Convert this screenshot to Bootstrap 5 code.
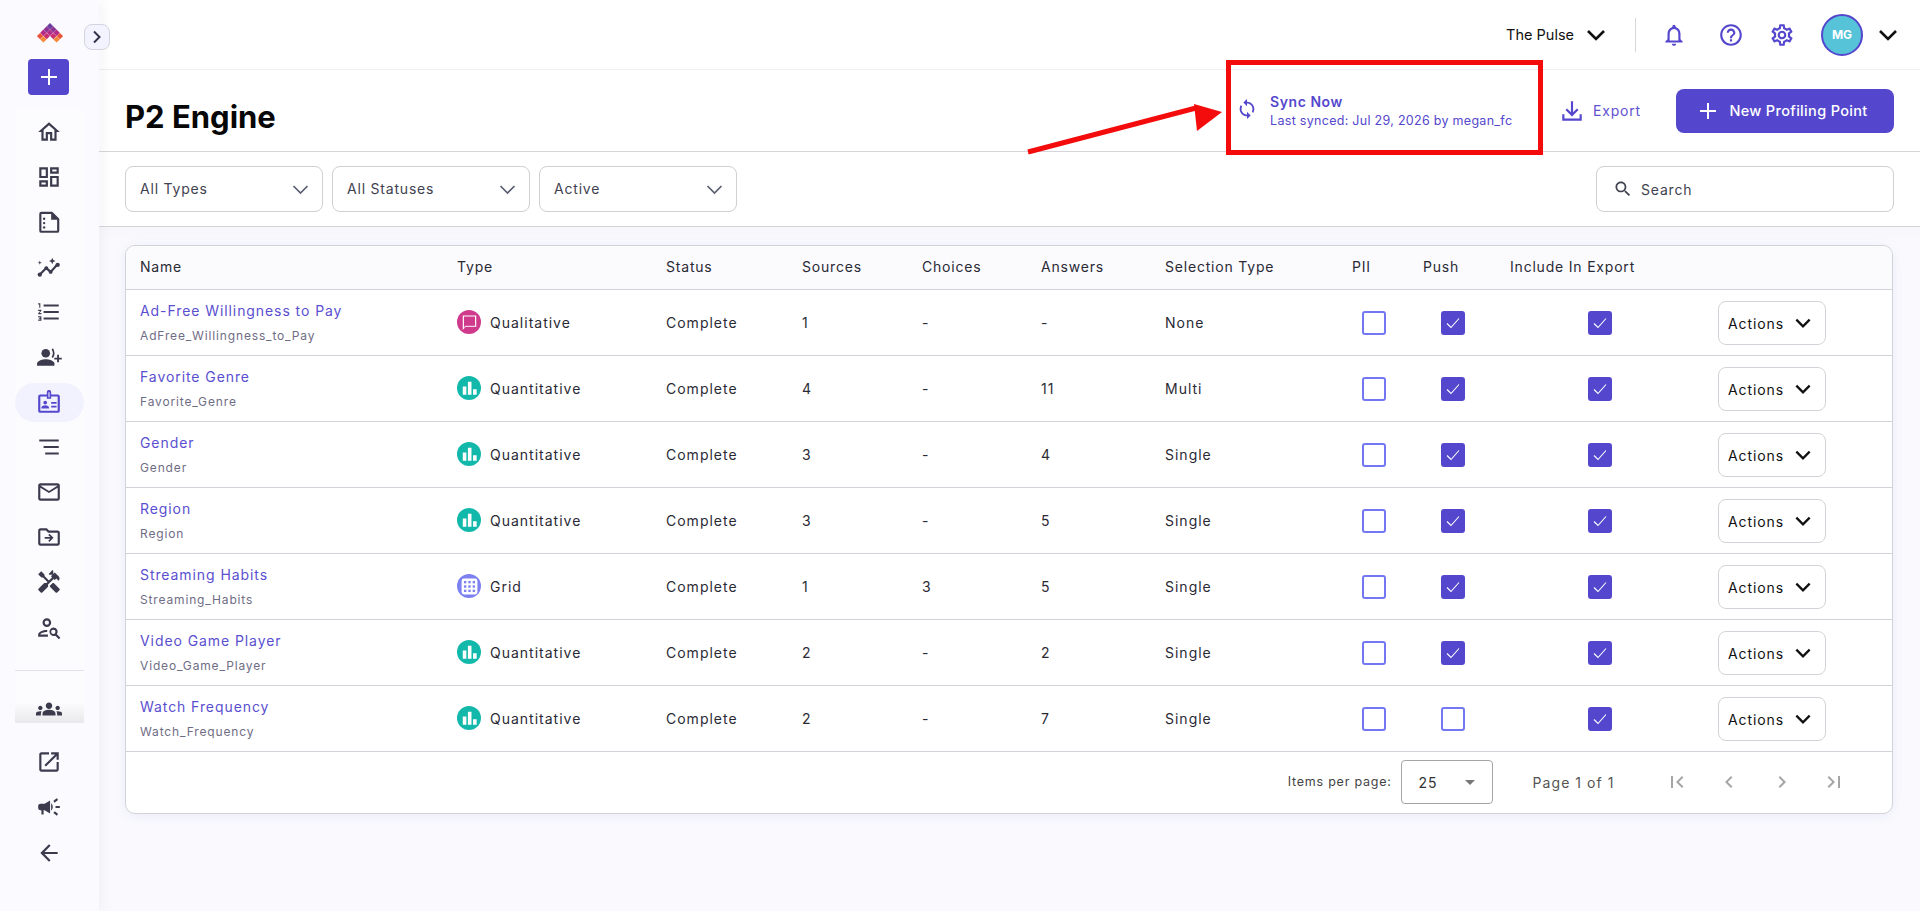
<!DOCTYPE html>
<html lang="en">
<head>
<meta charset="utf-8">
<title>P2 Engine</title>
<link href="https://cdn.jsdelivr.net/npm/bootstrap@5.3.0/dist/css/bootstrap.min.css" rel="stylesheet">
<style>
html,body{height:100%;}
body{font-family:Inter,"Liberation Sans",sans-serif;color:#2a2a35;background:#fff;font-size:14px;letter-spacing:.8px;overflow:hidden;}
.app-shell{height:911px;position:relative;}
.side-rail{width:99px;flex:none;background:#fafaff;box-shadow:4px 0 10px rgba(60,60,120,.05);position:relative;z-index:2;}
.rail-logo{height:59px;padding-top:23px;}
.rail-add{width:41px;height:36px;background:#5447cd;border-radius:4px;color:#fff;border:0;padding:0;margin-left:28px;}
.rail-col{width:69px;margin:14px auto 0;background:#fcfcfe;}
.rail-item{height:45.1px;color:#3c3b4e;padding-right:1px;}
.rail-item svg{width:26px;height:26px;fill:currentColor;}
.rail-item.is-on{color:#5447cd;position:relative;z-index:0;}
.rail-item.is-on::before{content:"";position:absolute;width:69px;height:39px;left:0;border-radius:20px;background:#f2f2fe;z-index:-1;}
.rail-rule{border-top:1px solid #e3e3e8;margin-top:20px;height:53px;background:linear-gradient(#fcfcfe 60%,#e9e9ec);}
.rail-rule svg{width:26px;height:26px;fill:#3c3b4e;margin-top:25px;margin-right:1px;}
.rail-low{margin-top:16px;}
.rail-low .rail-item{height:45.500px;}
.rail-toggle{position:absolute;left:84px;top:24px;width:26px;height:26px;border:1px solid #d4d4dc;border-radius:8px;background:#f3f3ff;z-index:3;padding:0;}
.top-strip{height:70px;flex:none;border-bottom:1px solid #eeeef3;padding-right:20px;}
.pulse-name{color:#111;font-size:14.5px;letter-spacing:0;margin-right:10px;}
.strip-rule{width:1px;height:34px;background:#d6d6da;margin:0 25px 0 27px;}
.strip-ico{fill:#5447cd;width:26px;height:26px;}
.ico-gap-a{margin-left:31px;}.ico-gap-b{margin-left:25px;}
.user-disc{width:42px;height:42px;border-radius:50%;background:#56c3d9;border:2px solid #5447cd;color:#fff;font-size:12px;font-weight:700;letter-spacing:0;margin:0 13px 0 26px;}
.pulse-chev{width:24px;height:24px;fill:none;stroke:#111;stroke-width:2.6;}
.head-row{height:82px;flex:none;border-bottom:1px solid #d6d6da;padding:0 26px;}
.page-name{font-size:31px;font-weight:700;color:#070707;letter-spacing:0;margin:13px 0 0;line-height:1.2;}
.sync-box{width:324px;flex:none;color:#5447cd;margin-top:-4px;padding-left:1px;}
.sync-box svg{width:22px;height:22px;flex:none;fill:#5447cd;margin-right:12px;}
.sync-text{padding-top:6px;}
.sync-title{font-size:14px;font-weight:600;line-height:18px;letter-spacing:.55px;}
.sync-sub{font-size:12.5px;line-height:20px;white-space:nowrap;letter-spacing:.29px;}
.export-link{color:#5d52cf;font-size:14px;margin-right:35px;}
.export-link svg{width:26px;height:26px;fill:#5447cd;margin-right:8px;}
.new-btn{width:218px;height:44px;background:#5447cd;color:#fff;border:0;border-radius:8px;font-size:14.5px;font-weight:500;padding:0 6px 0 0;letter-spacing:.33px;}
.new-btn svg{width:24px;height:24px;fill:#fff;margin-right:9px;}
.filter-row{height:75px;flex:none;border-bottom:1px solid #d6d6da;padding:0 26px;gap:9px;}
.drop-box{width:198px;height:46px;border:1px solid #cfcfd4;border-radius:8px;padding:0 11px 0 14px;color:#3f4250;font-size:14px;background:#fff;}
.drop-box span{padding-bottom:2px;}
.drop-box svg{width:21px;height:21px;fill:none;stroke:#5a6072;stroke-width:2;}
.find-box{width:298px;height:46px;border:1px solid #cfcfd4;border-radius:8px;padding-left:16px;color:#3f4250;}
.find-box svg{width:20px;height:20px;fill:#3f4250;margin-right:8px;}
.work-area{background:linear-gradient(#f7f7fb,#fafafe 18px);padding:18px 27px 0 26px;flex:1 1 auto;min-height:0;}
.grid-card{border:1px solid #d2d2d8;border-radius:10px;background:#fff;box-shadow:0 2px 14px rgba(80,80,200,.09);overflow:hidden;}
.pp-table{table-layout:fixed;width:100%;margin:0;font-size:14px;}
.pp-table th{background:#fbfbfe;font-weight:400;height:43px;padding:0 14px 2px;color:#2a2a35;border-bottom:1px solid #d2d2d8;white-space:nowrap;vertical-align:middle;}
.pp-table td{height:66px;padding:0 14px;border-bottom:1px solid #d2d2d8;vertical-align:middle;color:#2a2a35;background:#fff;white-space:nowrap;letter-spacing:1px;}
.pp-link{color:#5a4fd0;font-size:14px;line-height:20px;display:block;letter-spacing:.92px;padding-top:3px;}
.pp-sub{color:#6f6d85;font-size:12px;line-height:20px;margin-top:5px;display:block;letter-spacing:.85px;}
.type-disc{width:24px;height:24px;border-radius:50%;display:inline-flex;align-items:center;justify-content:center;margin-right:9px;flex:none;}
.disc-qual{background:#d03a8c;}.disc-quan{background:#12b9ab;}.disc-grid{background:#7c80f0;}
.type-disc svg{width:19px;height:19px;fill:#fff;}
.tick-box{width:24px;height:24px;border:2px solid #7378f2;border-radius:3px;display:block;margin:2px auto 0;background:#fff;}
.tick-box.is-on{background:#5447cd;border-color:#5447cd;}
.tick-box svg{display:block;width:20px;height:20px;fill:none;stroke:#fff;stroke-width:1.1;}
.act-btn{width:108px;height:44px;border:1px solid #d2d2d8;border-radius:8px;background:#fff;color:#111;padding:0 12px 0 9px;font-size:14px;letter-spacing:.9px;margin-top:2px;}
.act-btn svg{width:20px;height:20px;fill:none;stroke:#111;stroke-width:2.8;}
.pager{height:61px;padding-right:46px;color:#444;}
.per-label{font-size:12.5px;color:#444;margin-right:9px;letter-spacing:.77px;}
.per-box{width:92px;height:44px;border:1px solid #a5a5a5;border-radius:4px;padding:0 17px;font-size:14px;margin-right:40px;color:#333;}
.per-tri{width:0;height:0;border-left:5px solid transparent;border-right:5px solid transparent;border-top:5px solid #777;}
.page-of{font-size:14px;margin-right:50px;color:#555;letter-spacing:1.05px;}
.pager svg{width:24px;height:24px;fill:#a5a5a5;margin-right:28.5px;}
.pager svg:last-child{margin-right:0;}
.callout{position:absolute;left:1226px;top:60px;width:317px;height:95px;border:5px solid #f40c0c;pointer-events:none;z-index:5;}
.callout-arrow{position:absolute;left:1020px;top:95px;width:210px;height:65px;z-index:5;pointer-events:none;}
</style>
</head>
<body>
<svg width="0" height="0" class="position-absolute">
<defs>
<symbol id="i-home" viewBox="0 0 24 24"><path d="M12 5.69l5 4.5V18h-2v-6H9v6H7v-7.81l5-4.5M12 3L2 12h3v8h6v-6h2v6h6v-8h3L12 3z"/></symbol>
<symbol id="i-dash" viewBox="0 0 24 24"><path d="M19 5v2h-4V5h4M9 5v6H5V5h4m10 8v6h-4v-6h4M9 17v2H5v-2h4M21 3h-8v6h8V3zM11 3H3v10h8V3zm10 8h-8v10h8V11zm-10 4H3v6h8v-6z"/></symbol>
<symbol id="i-doc" viewBox="0 0 24 24"><path fill-rule="evenodd" d="M5 2.500h10l6.500 6.500v11a2 2 0 0 1-2 2H5a2 2 0 0 1-2-2v-15.500a2 2 0 0 1 2-2zm0 2v15.500h14.500V10h-5.500V4.500z"/><circle cx="7.500" cy="9" r="1.100"/><circle cx="7.500" cy="13" r="1.100"/><circle cx="7.500" cy="17" r="1.100"/></symbol>
<symbol id="i-trend" viewBox="0 0 24 24"><path d="M4 18.500l5.500-5.500 4 3.500 6-6.500" fill="none" stroke="currentColor" stroke-width="2"/><circle cx="3.500" cy="19" r="2"/><circle cx="9.500" cy="13" r="1.800"/><circle cx="13.500" cy="16.500" r="1.800"/><circle cx="20" cy="10" r="2"/><path d="M15 3.500l.9 2.100 2.100.9-2.100.9-.9 2.100-.9-2.100-2.100-.9 2.100-.9zM3.500 6l.5 1.500 1.500.5-1.500.5-.5 1.500-.5-1.500-1.500-.5 1.500-.5z"/></symbol>
<symbol id="i-list" viewBox="0 0 24 24"><path d="M2 17h2v.5H3v1h1v.5H2v1h3v-4H2v1zm1-9h1V4H2v1h1v3zm-1 3h1.800L2 13.100v.9h3v-1H3.200L5 10.900V10H2v1zm5-6v2h14V5H7zm0 14h14v-2H7v2zm0-6h14v-2H7v2z"/></symbol>
<symbol id="i-voice" viewBox="0 0 24 24"><circle cx="9" cy="8.500" r="4"/><path d="M1 20v-2c0-2.700 5.300-4 8-4s8 1.300 8 4v2z"/><path d="M15 4.500c1.800 2.200 1.800 5.800 0 8" fill="none" stroke="currentColor" stroke-width="1.600"/><path d="M19 12.500h1.700v2.600h2.600v1.700h-2.600v2.600H19v-2.600h-2.600v-1.700H19z" transform="translate(.5 -2.500)"/></symbol>
<symbol id="i-badge" viewBox="0 0 24 24"><path fill-rule="evenodd" d="M10 5V2.800A1.800 1.800 0 0 1 11.800 1h.4A1.800 1.800 0 0 1 14 2.800V5h6a2 2 0 0 1 2 2v13a2 2 0 0 1-2 2H4a2 2 0 0 1-2-2V7a2 2 0 0 1 2-2zm1.500-2v4.500h1V3zM4 7v13h16V7h-6v2h-4V7z"/><circle cx="8.500" cy="12.500" r="1.700"/><path d="M5 18v-.9c0-1.300 2.300-2 3.500-2s3.500.7 3.500 2v.9zM14 12h5v1.500h-5zM14 15.500h5V17h-5z"/></symbol>
<symbol id="i-sort" viewBox="0 0 24 24"><path d="M3 5h18v2H3zM7 11h14v2H7zM8.500 17H21v2H8.500z"/></symbol>
<symbol id="i-mail" viewBox="0 0 24 24"><path d="M20 4H4c-1.100 0-1.990.9-1.990 2L2 18c0 1.100.9 2 2 2h16c1.100 0 2-.9 2-2V6c0-1.100-.9-2-2-2zm0 14H4V8l8 5 8-5v10zm-8-7L4 6h16l-8 5z"/></symbol>
<symbol id="i-folder" viewBox="0 0 24 24"><path d="M20 6h-8l-2-2H4c-1.100 0-1.990.9-1.990 2L2 18c0 1.100.9 2 2 2h16c1.100 0 2-.9 2-2V8c0-1.100-.9-2-2-2zm0 12H4V6h5.170l2 2H20v10z"/><path d="M8 12h5.200l-1.900-1.900 1.100-1.100 3.800 3.800-3.800 3.800-1.100-1.100 1.900-1.900H8z"/></symbol>
<symbol id="i-tools" viewBox="0 0 24 24"><path d="M21.670 18.170l-5.300-5.300h-.99l-2.540 2.540v.99l5.300 5.300c.39.39 1.020.39 1.410 0l2.120-2.120c.39-.38.39-1.020 0-1.410z"/><path d="M17.340 10.190l1.410-1.410 2.120 2.120c1.170-1.170 1.170-3.070 0-4.240l-3.540-3.540-1.410 1.410V1.710l-.7-.71-3.540 3.540.71.71h2.830l-1.410 1.410 1.060 1.060-2.890 2.890-4.130-4.130V5.060L4.830 2.040 2 4.870 5.030 7.900h1.410l4.130 4.130-.85.85H7.600l-5.300 5.300c-.39.39-.39 1.020 0 1.410l2.120 2.120c.39.39 1.020.39 1.410 0l5.300-5.300v-2.120l5.150-5.150 1.060 1.050z"/></symbol>
<symbol id="i-usearch" viewBox="0 0 24 24"><path fill-rule="evenodd" d="M10 3a4 4 0 1 1 0 8 4 4 0 0 1 0-8zm0 2a2 2 0 1 0 0 4 2 2 0 0 0 0-4zM2 20v-2c0-2.800 5.400-4.500 8.500-4.200l-.3 2C8.500 15.600 4 16.600 4 18h7v2z"/><path fill-rule="evenodd" d="M16 11.500a4 4 0 0 1 3.300 6.300l3.200 3.200-1.400 1.400-3.200-3.200A4 4 0 1 1 16 11.500zm0 2a2 2 0 1 0 0 4 2 2 0 0 0 0-4z"/></symbol>
<symbol id="i-groups" viewBox="0 0 24 24"><path d="M12 12.750c1.630 0 3.070.39 4.240.9 1.080.48 1.760 1.560 1.760 2.730V18H6v-1.610c0-1.180.68-2.260 1.760-2.730 1.170-.52 2.610-.91 4.240-.91zM4 13c1.100 0 2-.9 2-2s-.9-2-2-2-2 .9-2 2 .9 2 2 2zm1.130 1.100c-.37-.06-.74-.1-1.130-.1-.99 0-1.930.21-2.780.58C.48 14.900 0 15.620 0 16.430V18h4.500v-1.610c0-.83.23-1.610.63-2.290zM20 13c1.100 0 2-.9 2-2s-.9-2-2-2-2 .9-2 2 .9 2 2 2zm4 3.430c0-.81-.48-1.530-1.220-1.850-.85-.37-1.790-.58-2.780-.58-.39 0-.76.04-1.130.1.4.68.63 1.460.63 2.290V18H24v-1.570zM12 6c1.660 0 3 1.340 3 3s-1.340 3-3 3-3-1.340-3-3 1.340-3 3-3z"/></symbol>
<symbol id="i-open" viewBox="0 0 24 24"><path d="M19 19H5V5h7V3H5c-1.110 0-2 .9-2 2v14c0 1.100.89 2 2 2h14c1.100 0 2-.9 2-2v-7h-2v7zM14 3v2h3.590l-9.830 9.830 1.410 1.410L19 6.410V10h2V3h-7z"/></symbol>
<symbol id="i-horn" viewBox="0 0 24 24"><path d="M18 11v2h4v-2h-4zm-2 6.610c.96.71 2.210 1.650 3.200 2.390.4-.53.8-1.070 1.200-1.600-.99-.74-2.240-1.680-3.200-2.400-.4.54-.8 1.080-1.200 1.610zM20.400 5.600c-.4-.53-.8-1.070-1.200-1.600-.99.74-2.240 1.680-3.200 2.400.4.53.8 1.070 1.200 1.600.96-.72 2.210-1.650 3.200-2.400zM4 9c-1.100 0-2 .9-2 2v2c0 1.100.9 2 2 2h1v4h2v-4h1l5 3V6L8 9H4zm11.500 3c0-1.330-.58-2.530-1.500-3.350v6.690c.92-.81 1.500-2.010 1.500-3.340z"/></symbol>
<symbol id="i-back" viewBox="0 0 24 24"><path d="M20 11H7.830l5.590-5.590L12 4l-8 8 8 8 1.410-1.410L7.830 13H20v-2z"/></symbol>
<symbol id="i-bell" viewBox="0 0 24 24"><path d="M12 22c1.100 0 2-.9 2-2h-4c0 1.100.9 2 2 2zm6-6v-5c0-3.070-1.630-5.640-4.500-6.320V4c0-.83-.67-1.500-1.500-1.500s-1.500.67-1.500 1.500v.68C7.640 5.360 6 7.920 6 11v5l-2 2v1h16v-1l-2-2zm-2 1H8v-6c0-2.480 1.510-4.500 4-4.500s4 2.020 4 4.500v6z"/></symbol>
<symbol id="i-help" viewBox="0 0 24 24"><path d="M11 18h2v-2h-2v2zm1-16C6.480 2 2 6.480 2 12s4.480 10 10 10 10-4.480 10-10S17.520 2 12 2zm0 18c-4.410 0-8-3.590-8-8s3.590-8 8-8 8 3.590 8 8-3.590 8-8 8zm0-14c-2.210 0-4 1.790-4 4h2c0-1.100.9-2 2-2s2 .9 2 2c0 2-3 1.750-3 5h2c0-2.250 3-2.500 3-5 0-2.210-1.790-4-4-4z"/></symbol>
<symbol id="i-gear" viewBox="0 0 24 24"><path d="M19.430 12.980c.04-.32.07-.64.07-.98 0-.34-.03-.66-.07-.98l2.110-1.650c.19-.15.24-.42.12-.64l-2-3.460c-.09-.16-.26-.25-.44-.25-.06 0-.12.01-.17.03l-2.490 1c-.52-.4-1.080-.73-1.690-.98l-.38-2.650C14.460 2.180 14.250 2 14 2h-4c-.25 0-.46.18-.49.42l-.38 2.650c-.61.25-1.170.59-1.690.98l-2.490-1c-.06-.02-.12-.03-.18-.03-.17 0-.34.09-.43.25l-2 3.460c-.13.22-.07.49.12.64l2.110 1.650c-.04.32-.07.65-.07.98 0 .33.03.66.07.98l-2.110 1.650c-.19.15-.24.42-.12.64l2 3.460c.09.16.26.25.44.25.06 0 .12-.01.17-.03l2.490-1c.52.4 1.080.73 1.690.98l.38 2.650c.03.24.24.42.49.42h4c.25 0 .46-.18.49-.42l.38-2.650c.61-.25 1.170-.59 1.690-.98l2.490 1c.06.02.12.03.18.03.17 0 .34-.09.43-.25l2-3.460c.12-.22.07-.49-.12-.64l-2.110-1.650zm-1.980-1.710c.04.31.05.52.05.73 0 .21-.02.43-.05.73l-.14 1.130.89.7 1.080.84-.7 1.210-1.270-.51-1.040-.42-.9.68c-.43.32-.84.56-1.250.73l-1.060.43-.16 1.130-.2 1.350h-1.400l-.19-1.350-.16-1.130-1.060-.43c-.43-.18-.83-.41-1.230-.71l-.91-.7-1.060.43-1.270.51-.7-1.210 1.080-.84.89-.7-.14-1.130c-.03-.31-.05-.54-.05-.74s.02-.43.05-.73l.14-1.130-.89-.7-1.080-.84.7-1.210 1.270.51 1.040.42.9-.68c.43-.32.84-.56 1.250-.73l1.060-.43.16-1.130.2-1.350h1.390l.19 1.350.16 1.130 1.060.43c.43.18.83.41 1.230.71l.91.7 1.060-.43 1.270-.51.7 1.210-1.070.85-.89.7.14 1.130zM12 8c-2.210 0-4 1.790-4 4s1.790 4 4 4 4-1.790 4-4-1.790-4-4-4zm0 6c-1.100 0-2-.9-2-2s.9-2 2-2 2 .9 2 2-.9 2-2 2z"/></symbol>
<symbol id="i-sync" viewBox="0 0 24 24"><path d="M12 4V1L8 5l4 4V6c3.310 0 6 2.690 6 6 0 1.010-.25 1.970-.7 2.800l1.460 1.460C19.540 15.030 20 13.570 20 12c0-4.420-3.580-8-8-8zm0 14c-3.310 0-6-2.690-6-6 0-1.010.25-1.970.7-2.800L5.240 7.740C4.460 8.970 4 10.430 4 12c0 4.420 3.580 8 8 8v3l4-4-4-4v3z"/></symbol>
<symbol id="i-search" viewBox="0 0 24 24"><path d="M15.500 14h-.79l-.28-.27C15.410 12.590 16 11.110 16 9.500 16 5.910 13.090 3 9.500 3S3 5.910 3 9.500 5.910 16 9.500 16c1.610 0 3.090-.59 4.230-1.570l.27.28v.79l5 4.990L20.490 19l-4.990-5zm-6 0C7.010 14 5 11.990 5 9.500S7.010 5 9.500 5 14 7.010 14 9.500 11.990 14 9.500 14z"/></symbol>
<symbol id="i-down" viewBox="0 0 24 24"><path d="M11 3h2v10.200l3.600-3.600 1.400 1.400-6 6-6-6 1.400-1.400 3.600 3.600zM3 15h2v4h14v-4h2v6H3z"/></symbol>
<symbol id="i-plus" viewBox="0 0 24 24"><path d="M11 4h2v7h7v2h-7v7h-2v-7H4v-2h7z"/></symbol>
<symbol id="i-chev" viewBox="0 0 24 24"><path d="M4 8l8 8 8-8"/></symbol>
<symbol id="i-bars" viewBox="0 0 24 24"><path d="M3.500 9.500h4.500V20H3.500zM10 3.500h4.500V20H10zM16.500 13H21v7h-4.500z"/></symbol>
<symbol id="i-chat" viewBox="0 0 24 24"><path d="M3.500 3h17v14.500H7L3.500 21.500zM5 19l1.500-2.800H19V4.500H5z" fill-rule="evenodd"/><path d="M6 5.500h12v10H6z" fill="#d03a8c"/></symbol>
<symbol id="i-dots" viewBox="0 0 24 24"><path fill-rule="evenodd" d="M5 2h14a3 3 0 0 1 3 3v14a3 3 0 0 1-3 3H5a3 3 0 0 1-3-3V5a3 3 0 0 1 3-3z"/><g fill="#7c80f0"><rect x="5" y="5" width="3" height="3"/><rect x="10.500" y="5" width="3" height="3"/><rect x="16" y="5" width="3" height="3"/><rect x="5" y="10.500" width="3" height="3"/><rect x="10.500" y="10.500" width="3" height="3"/><rect x="16" y="10.500" width="3" height="3"/><rect x="5" y="16" width="3" height="3"/><rect x="10.500" y="16" width="3" height="3"/><rect x="16" y="16" width="3" height="3"/></g></symbol>
<symbol id="i-tick" viewBox="0 0 20 20"><path d="M4 10.500l4 4 8-9"/></symbol>
<path id="dmd" d="M0-3.200L3.200 0 0 3.200-3.200 0z"/>
</defs>
</svg>

<div class="app-shell d-flex">
  <aside class="side-rail d-flex flex-column">
    <div class="rail-logo d-flex justify-content-center">
      <svg width="26" height="21" viewBox="0 0 26 21">
        <use href="#dmd" x="13" y="3.200" fill="#6a3f9f"/>
        <use href="#dmd" x="9.700" y="6.500" fill="#8d3391"/><use href="#dmd" x="16.300" y="6.500" fill="#8d3391"/>
        <use href="#dmd" x="6.400" y="9.800" fill="#b52b8a"/><use href="#dmd" x="13" y="9.800" fill="#b52b8a"/><use href="#dmd" x="19.600" y="9.800" fill="#b52b8a"/>
        <use href="#dmd" x="3.100" y="13.100" fill="#e8553a"/><use href="#dmd" x="9.700" y="13.100" fill="#c8306f"/><use href="#dmd" x="16.300" y="13.100" fill="#c8306f"/><use href="#dmd" x="22.900" y="13.100" fill="#e8553a"/>
        <use href="#dmd" x="6.400" y="16.400" fill="#f6883a"/><use href="#dmd" x="19.600" y="16.400" fill="#f6883a"/>
      </svg>
    </div>
    <div class="d-flex">
      <button class="rail-add d-flex align-items-center justify-content-center" aria-label="Add"><svg width="24" height="24" fill="#fff"><use href="#i-plus"/></svg></button>
    </div>
    <div class="rail-col">
      <div class="rail-item d-flex align-items-center justify-content-center"><svg><use href="#i-home"/></svg></div>
      <div class="rail-item d-flex align-items-center justify-content-center"><svg><use href="#i-dash"/></svg></div>
      <div class="rail-item d-flex align-items-center justify-content-center"><svg><use href="#i-doc"/></svg></div>
      <div class="rail-item d-flex align-items-center justify-content-center"><svg><use href="#i-trend"/></svg></div>
      <div class="rail-item d-flex align-items-center justify-content-center"><svg><use href="#i-list"/></svg></div>
      <div class="rail-item d-flex align-items-center justify-content-center"><svg><use href="#i-voice"/></svg></div>
      <div class="rail-item is-on d-flex align-items-center justify-content-center"><svg><use href="#i-badge"/></svg></div>
      <div class="rail-item d-flex align-items-center justify-content-center"><svg><use href="#i-sort"/></svg></div>
      <div class="rail-item d-flex align-items-center justify-content-center"><svg><use href="#i-mail"/></svg></div>
      <div class="rail-item d-flex align-items-center justify-content-center"><svg><use href="#i-folder"/></svg></div>
      <div class="rail-item d-flex align-items-center justify-content-center"><svg><use href="#i-tools"/></svg></div>
      <div class="rail-item d-flex align-items-center justify-content-center"><svg><use href="#i-usearch"/></svg></div>
      <div class="rail-rule d-flex justify-content-center"><svg><use href="#i-groups"/></svg></div>
    </div>
    <div class="rail-low">
      <div class="rail-item d-flex align-items-center justify-content-center"><svg><use href="#i-open"/></svg></div>
      <div class="rail-item d-flex align-items-center justify-content-center"><svg><use href="#i-horn"/></svg></div>
      <div class="rail-item d-flex align-items-center justify-content-center"><svg><use href="#i-back"/></svg></div>
    </div>
  </aside>
  <button class="rail-toggle d-flex align-items-center justify-content-center" aria-label="Expand"><svg width="14" height="14" viewBox="0 0 14 14" fill="none" stroke="#33324a" stroke-width="2"><path d="M4 1.500l5.500 5.500L4 12.500"/></svg></button>

  <main class="flex-grow-1 d-flex flex-column">
    <div class="top-strip d-flex align-items-center justify-content-end">
      <span class="pulse-name">The Pulse</span>
      <svg class="pulse-chev"><use href="#i-chev"/></svg>
      <span class="strip-rule"></span>
      <svg class="strip-ico"><use href="#i-bell"/></svg>
      <svg class="strip-ico ico-gap-a"><use href="#i-help"/></svg>
      <svg class="strip-ico ico-gap-b"><use href="#i-gear"/></svg>
      <span class="user-disc d-flex align-items-center justify-content-center">MG</span>
      <svg class="pulse-chev"><use href="#i-chev"/></svg>
    </div>
    <div class="head-row d-flex align-items-center">
      <h1 class="page-name me-auto">P2 Engine</h1>
      <div class="sync-box d-flex align-items-center">
        <svg><use href="#i-sync"/></svg>
        <div class="sync-text"><div class="sync-title">Sync Now</div><div class="sync-sub">Last synced: Jul 29, 2026 by megan_fc</div></div>
      </div>
      <div class="export-link d-flex align-items-center"><svg><use href="#i-down"/></svg>Export</div>
      <button class="new-btn d-flex align-items-center justify-content-center"><svg><use href="#i-plus"/></svg>New Profiling Point</button>
    </div>
    <div class="filter-row d-flex align-items-center">
      <div class="drop-box d-flex align-items-center justify-content-between"><span>All Types</span><svg><use href="#i-chev"/></svg></div>
      <div class="drop-box d-flex align-items-center justify-content-between"><span>All Statuses</span><svg><use href="#i-chev"/></svg></div>
      <div class="drop-box d-flex align-items-center justify-content-between"><span>Active</span><svg><use href="#i-chev"/></svg></div>
      <div class="find-box d-flex align-items-center ms-auto"><svg><use href="#i-search"/></svg>Search</div>
    </div>
    <div class="work-area">
      <div class="grid-card">
        <table class="pp-table">
          <colgroup><col style="width:317px"><col style="width:209px"><col style="width:136px"><col style="width:120px"><col style="width:119px"><col style="width:124px"><col style="width:187px"><col style="width:71px"><col style="width:87px"><col style="width:208px"><col></colgroup>
          <thead><tr><th>Name</th><th>Type</th><th>Status</th><th>Sources</th><th>Choices</th><th>Answers</th><th>Selection Type</th><th>PII</th><th>Push</th><th>Include In Export</th><th></th></tr></thead>
          <tbody id="pp-rows"></tbody>
        </table>
        <div class="pager d-flex align-items-center justify-content-end">
          <span class="per-label">Items per page:</span>
          <div class="per-box d-flex align-items-center justify-content-between"><span>25</span><span class="per-tri"></span></div>
          <span class="page-of">Page 1 of 1</span>
          <svg viewBox="0 0 24 24"><path d="M18.410 16.590L13.820 12l4.590-4.590L17 6l-6 6 6 6zM6 6h2v12H6z"/></svg>
          <svg viewBox="0 0 24 24"><path d="M15.410 7.410L14 6l-6 6 6 6 1.410-1.410L10.830 12z"/></svg>
          <svg viewBox="0 0 24 24"><path d="M10 6L8.590 7.410 13.170 12l-4.580 4.590L10 18l6-6z"/></svg>
          <svg viewBox="0 0 24 24"><path d="M5.590 7.410L10.180 12l-4.590 4.590L7 18l6-6-6-6zM16 6h2v12h-2z"/></svg>
        </div>
      </div>
    </div>
  </main>
  <div class="callout"></div>
  <svg class="callout-arrow" viewBox="0 0 210 65"><path d="M8 57L176 13" stroke="#f40c0c" stroke-width="5" fill="none"/><path d="M202 17L174 9l3 27z" fill="#f40c0c"/></svg>
</div>
<script>
var rows=[
["Ad-Free Willingness to Pay","AdFree_Willingness_to_Pay","q","1","-","-","None",1,1],
["Favorite Genre","Favorite_Genre","n","4","-","11","Multi",1,1],
["Gender","Gender","n","3","-","4","Single",1,1],
["Region","Region","n","3","-","5","Single",1,1],
["Streaming Habits","Streaming_Habits","g","1","3","5","Single",1,1],
["Video Game Player","Video_Game_Player","n","2","-","2","Single",1,1],
["Watch Frequency","Watch_Frequency","n","2","-","7","Single",0,1]];
var types={q:["disc-qual","i-chat","Qualitative"],n:["disc-quan","i-bars","Quantitative"],g:["disc-grid","i-dots","Grid"]};
function box(on){return '<span class="tick-box'+(on?' is-on':'')+'">'+(on?'<svg><use href="#i-tick"/></svg>':'')+'</span>';}
document.getElementById('pp-rows').innerHTML=rows.map(function(r){var t=types[r[2]];
return '<tr><td><a class="pp-link text-decoration-none" href="#">'+r[0]+'</a><span class="pp-sub">'+r[1]+'</span></td>'+
'<td><span class="d-flex align-items-center"><span class="type-disc '+t[0]+'"><svg><use href="#'+t[1]+'"/></svg></span>'+t[2]+'</span></td>'+
'<td>Complete</td><td>'+r[3]+'</td><td>'+r[4]+'</td><td>'+r[5]+'</td><td>'+r[6]+'</td>'+
'<td>'+box(0)+'</td><td>'+box(r[7])+'</td><td>'+box(r[8])+'</td>'+
'<td><button class="act-btn d-flex align-items-center justify-content-between">Actions<svg><use href="#i-chev"/></svg></button></td></tr>';}).join('');
</script>
<script src="https://cdn.jsdelivr.net/npm/bootstrap@5.3.0/dist/js/bootstrap.bundle.min.js"></script>
</body>
</html>
